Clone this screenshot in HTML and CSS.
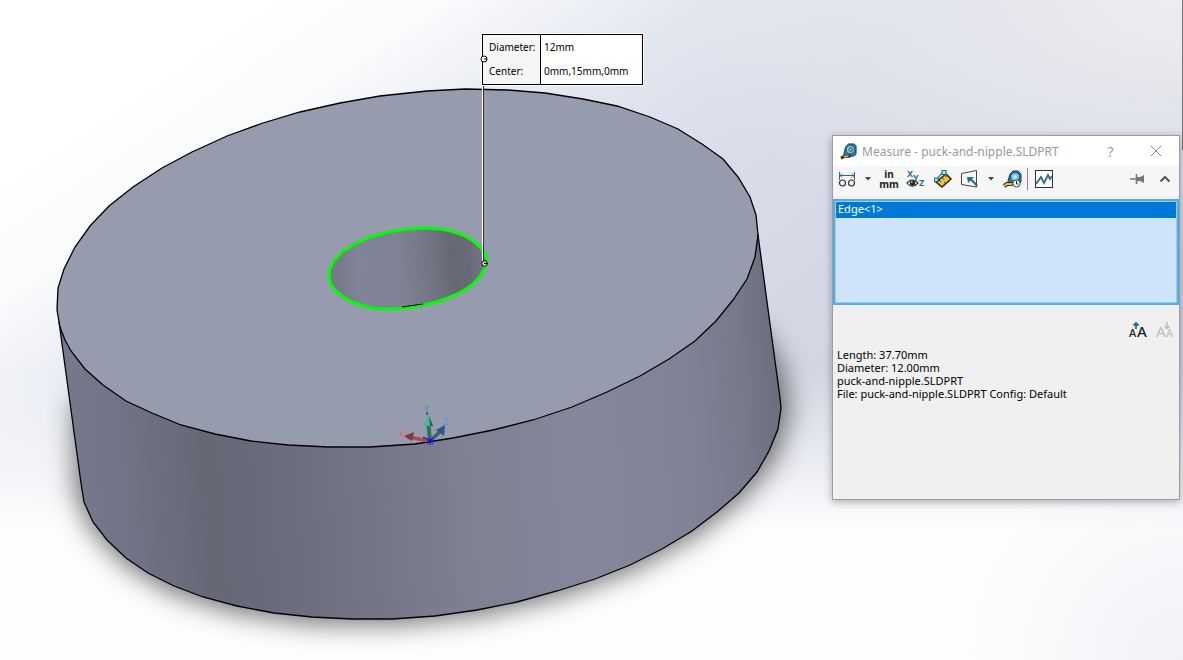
FILE: index.html
```html
<!DOCTYPE html>
<html lang="en">
<head>
<meta charset="utf-8">
<title>Measure - puck-and-nipple.SLDPRT</title>
<link rel="stylesheet" href="styles.css">
</head>
<body>
<main class="viewport">
  <svg class="model" role="img" aria-label="Puck model with selected hole edge">
    <defs>
      <linearGradient id="side" gradientUnits="userSpaceOnUse" x1="60" y1="470" x2="780" y2="415">
        <stop offset="0" stop-color="#77798c"/>
        <stop offset=".08" stop-color="#727587"/>
        <stop offset=".2" stop-color="#666876"/>
        <stop offset=".26" stop-color="#686a79"/>
        <stop offset=".42" stop-color="#747686"/>
        <stop offset=".56" stop-color="#7e8192"/>
        <stop offset=".72" stop-color="#838799"/>
        <stop offset=".87" stop-color="#808395"/>
        <stop offset=".95" stop-color="#777a8b"/>
        <stop offset="1" stop-color="#6c6e7e"/>
      </linearGradient>
      <linearGradient id="bore" gradientUnits="userSpaceOnUse" x1="329" y1="272" x2="487" y2="262">
        <stop offset="0" stop-color="#747686"/>
        <stop offset=".2" stop-color="#808496"/>
        <stop offset=".45" stop-color="#808294"/>
        <stop offset=".65" stop-color="#737583"/>
        <stop offset=".78" stop-color="#666875"/>
        <stop offset=".88" stop-color="#686a79"/>
        <stop offset="1" stop-color="#747687"/>
      </linearGradient>
      <filter id="soft" x="-20%" y="-20%" width="140%" height="140%" color-interpolation-filters="sRGB"><feGaussianBlur stdDeviation="13"/></filter>
    </defs>
    <path d="M74 400L75 490L89 527L123 564L171 593L235 613L312 624L392 625L479 616L560 597L634 570L696 536L744 498L777 457L790 410L783 370L763 330Z" fill="#484848" opacity=".75" filter="url(#soft)"/>
    <path d="M59 322L81 483L84 502L93 522L107 540L126 558L148 573L174 586L203 597L237 606L274 613L312 617L352 619L392 619L435 616L477 610L517 602L557 591L595 579L630 565L662 549L692 531L717 512L739 493L757 472L769 451L778 429L781 408L780 398L758 235L400 250Z" fill="url(#side)" stroke="#000" stroke-width="1.3"/>
    <path d="M465 89L427 91L380 96L340 103L300 112L263 123L227 136L192 152L162 168L133 187L109 206L90 226L75 247L64 269L58 288L57 310L60 327L65 340L71 351L85 369L103 385L126 401L152 413L181 425L215 434L251 441L288 445L328 447L370 447L415 444L453 438L493 430L533 420L572 407L607 392L640 376L669 359L695 341L716 321L733 300L747 279L755 257L758 235L756 215L750 197L738 177L723 159L702 144L678 129L650 117L617 106L583 99L545 93L508 90Z" fill="#979bae" stroke="#000" stroke-width="1.3"/>
    <path d="M329 277L330 268L334 261L343 251L355 244L370 237L388 232L407 229L427 228L440 229L451 231L463 235L472 240L480 247L485 254L487 261L485 268L481 275L473 284L463 291L450 297L437 302L423 305L409 308L395 309L382 309L371 308L361 305L352 302L343 297L336 291L331 285Z" fill="url(#bore)" stroke="#0f0" stroke-width="3"/>
    <path d="M402 307L423 304" stroke="#000"/>
    <g class="triad">
      <path d="M430 441L443 429" stroke="#35607f" stroke-width="3.5"/>
      <path d="M436 430L445 425L444 436Z" fill="#2e5a7a"/>
      <path d="M430 441L408 437" stroke="#b0484c" stroke-width="3.5"/>
      <path d="M404 436L414 432L412 441Z" fill="#7c3b40"/>
      <path d="M430 441L428 420" stroke="#29745d" stroke-width="4"/>
      <path d="M428 414L423 426H433Z" fill="#55b596"/>
      <path d="M429 416L430 426H433Z" fill="#235f4c"/>
      <path d="M427 412V415M430 438V445M427 441H434M427 444L433 438M427 438L433 444" stroke="#00f"/>
      <path d="M427 439L423 437" stroke="#0000c0"/>
      <text x="399" y="437" fill="#ff5b5b">X</text>
      <text x="424" y="412" fill="#22a878">Y</text>
      <text x="443" y="425" fill="#3ba0f0">Z</text>
    </g>
    <path d="M482.5 60V263" stroke="#fff"/>
    <path d="M483.5 86V263" stroke="#333"/>
    <circle cx="484.500" cy="263.500" r="2.800" fill="#cfd0d6" stroke="#000"/>
    <path d="M484 263.500H488" stroke="#000"/>
  </svg>

  <div class="callout">
    <table class="callout-table">
      <tr><th scope="row">Diameter:</th><td>12mm</td></tr>
      <tr><th scope="row">Center:</th><td>0mm,15mm,0mm</td></tr>
    </table>
    <svg class="anchor" width="8" height="8" viewBox="0 0 8 8" aria-hidden="true"><circle cx="4" cy="4" r="3" fill="#fff" stroke="#000"/><path d="M4 4H7" stroke="#000"/></svg>
  </div>

  <div class="view-edge"></div>

  <section class="dialog" role="dialog" aria-labelledby="dialog-title">
    <header class="titlebar">
      <svg width="17" height="17" viewBox="0 0 18 18" aria-hidden="true"><path d="M4 12L6 4L9 1H15L17 3V12L14 14H6Z" fill="#2d7da6" stroke="#143d57"/><circle cx="11" cy="7" r="4.500" fill="#7cc4e4" stroke="#1c5878"/><circle cx="11.500" cy="7" r="1.800" fill="#e5bf5c" stroke="#27495b"/><path d="M11 14H5L1 16" stroke="#332b20" stroke-width="3" fill="none"/><path d="M9 13.500L4 14.500" stroke="#edbd43" stroke-width="1.500"/></svg>
      <h1 id="dialog-title">Measure - puck-and-nipple.SLDPRT</h1>
      <button class="window-button" aria-label="Help">?</button>
      <button class="window-button" aria-label="Close"><svg width="12" height="12" viewBox="0 0 12 12"><path d="M1 1L11 11M11 1L1 11" stroke="#888" fill="none"/></svg></button>
    </header>

    <div class="toolbar" role="toolbar" aria-label="Measure tools">
      <button class="tool" aria-label="Arc and circle measurements"><svg width="18" height="18" viewBox="0 0 18 18" fill="none"><path d="M1.500 2V10M16.500 2V10M2 5.500H16" stroke="#276b8f"/><path d="M4 3.500L2 5.500L4 7.500M14 3.500L16 5.500L14 7.500" stroke="#276b8f"/><circle cx="4.500" cy="13" r="3" stroke="#333" stroke-width="1.200"/><circle cx="13.500" cy="13" r="3" stroke="#333" stroke-width="1.200"/></svg></button>
      <button class="caret" aria-label="Arc options"><svg width="6" height="4" viewBox="0 0 6 4"><path d="M0 0H6L3 3.500Z" fill="#444"/></svg></button>
      <button class="tool units" aria-label="Units"><span>in</span><span>mm</span></button>
      <button class="tool" aria-label="Show XYZ measurements"><svg class="xyz" width="18" height="18" viewBox="0 0 18 18"><g fill="#286f96"><text x="0" y="7">X</text><text x="6" y="11">Y</text><text x="12" y="16">Z</text></g><path d="M0 13Q5 7 11 13Q5 19.500 0 13Z" fill="#fff" stroke="#333" stroke-width="1.200"/><circle cx="5.500" cy="13" r="2.700" fill="#222"/><circle cx="4.800" cy="12.100" r=".8" fill="#fff"/></svg></button>
      <button class="tool" aria-label="Point-to-point"><svg width="18" height="18" viewBox="0 0 18 18"><path d="M2 10L9 2" stroke="#2481a7" stroke-width="1.300"/><path d="M2 12L12 4L17 9L8 17Z" fill="#edc13f" stroke="#2e2412" stroke-width="1.500"/><path d="M5 10L7 12M8 7.500L10 9.500M10 12L12 14M11 5.500L12.500 7" stroke="#3e3016"/><rect x="8" y=".5" width="4" height="4" fill="#b2e0ef" stroke="#1c6b8c"/><rect x=".5" y="8" width="3.500" height="3.500" fill="#b2e0ef" stroke="#1c6b8c"/></svg></button>
      <button class="tool" aria-label="Projected on"><svg width="18" height="18" viewBox="0 0 18 18"><path d="M.5 3.500L15.500.5V17L.5 14.500Z" fill="#f8f8f8" stroke="#444"/><path d="M6 7H13L11 9L17 15L15.500 16.500L9.500 10.500L7 13Z" fill="#246b93"/></svg></button>
      <button class="caret" aria-label="Projection options"><svg width="6" height="4" viewBox="0 0 6 4"><path d="M0 0H6L3 3.500Z" fill="#444"/></svg></button>
      <button class="tool" aria-label="Measurement history"><svg width="18" height="18" viewBox="0 0 18 18"><path d="M5 11L7 4L10 1H15L18 4V12L13 15H5Z" fill="#2d7da6" stroke="#143d57"/><circle cx="12" cy="7" r="4.500" fill="#7cc4e4" stroke="#1c5878"/><circle cx="12" cy="7" r="1.800" fill="#d8eaf0"/><path d="M9 14H4L1 16" stroke="#332b20" stroke-width="4" fill="none"/><path d="M9 14H4L1 16" stroke="#edbd43" stroke-width="2" fill="none"/><circle cx="13.500" cy="13.500" r="3.600" fill="#fff" stroke="#444"/><path d="M13.500 11V14H15.500" stroke="#222" fill="none"/></svg></button>
      <span class="separator"></span>
      <button class="tool" aria-label="Create sensor"><svg width="18" height="18" viewBox="0 0 18 18"><rect x=".5" y=".5" width="17" height="17" fill="#fff" stroke="#333"/><path d="M1 14L6 7L9 13L13 5L15 9L17 6" fill="none" stroke="#286e94" stroke-width="1.800"/></svg></button>
      <button class="tool pin" aria-label="Keep visible"><svg width="15" height="12" viewBox="0 0 15 12"><path d="M0 6H6M6.500 1V11" stroke="#777" stroke-width="1.600"/><path d="M7 4H10L14 2V10L10 8H7Z" fill="#777"/></svg></button>
      <button class="tool fold" aria-label="Collapse"><svg width="10" height="8" viewBox="0 0 10 8"><path d="M.5 6.500L5 2L9.500 6.500" fill="none" stroke="#555" stroke-width="2"/></svg></button>
    </div>

    <ul class="selection" role="listbox" aria-label="Selections">
      <li role="option" aria-selected="true">Edge&lt;1&gt;</li>
    </ul>

    <div class="font-tools">
      <button class="tool" aria-label="Increase font size"><svg width="18" height="16" viewBox="0 0 18 16" class="letters"><g fill="#222"><text class="small" x="0" y="15">A</text><text class="big" x="8" y="15">A</text></g><path d="M7 7V2M4.500 3.500L7 1L9.500 3.500" fill="none" stroke="#276b8f" stroke-width="1.800"/></svg></button>
      <button class="tool" aria-label="Decrease font size" disabled><svg width="18" height="16" viewBox="0 0 18 16" class="letters"><g fill="#c2c2c2"><text class="big" x="0" y="15">A</text><text class="small" x="10" y="15">A</text></g><path d="M11 0V6M8.500 4L11 6.500L13.500 4" fill="none" stroke="#c2c2c2" stroke-width="1.600"/></svg></button>
    </div>

    <div class="results">
      <p>Length: 37.70mm</p>
      <p>Diameter: 12.00mm</p>
      <p>puck-and-nipple.SLDPRT</p>
      <p>File: puck-and-nipple.SLDPRT Config: Default</p>
    </div>
  </section>
</main>
</body>
</html>
```
FILE: styles.css
```css
* {
  box-sizing: border-box;
}

body {
  margin: 0;
  font: 11px/13px "Noto Sans", "Open Sans", sans-serif;
  color: #000;
}

button {
  margin: 0;
  padding: 0;
  border: 0;
  background: none;
  color: inherit;
  font: inherit;
}

svg {
  display: block;
  overflow: visible;
}

.viewport {
  position: relative;
  height: 100vh;
  overflow: hidden;
  background:
    radial-gradient(circle at 100% 100%, #f1f2f7 0, rgba(241, 242, 247, 0) 16%),
    linear-gradient(to bottom, rgba(253, 253, 254, 0) 56%, #fdfdfe 80%),
    radial-gradient(ellipse at 100% 0, #ededf0 0, rgba(237, 237, 240, 0) 30%),
    linear-gradient(146deg, #fff 12%, #f9fafc 21%, #e2e6ef 33%, #dadde9 44%, #d3d7e4 60%, #cdd2df 75%);
}

.model {
  width: 100%;
  height: 100%;
}

.triad {
  font-size: 9px;
}

.callout {
  position: absolute;
  top: 34px;
  left: 482px;
  outline: 1px solid #fff;
  background: #fff;
}

.callout-table {
  border: 1px solid #000;
  border-collapse: separate;
  border-spacing: 0;
  width: 161px;
}

.callout-table th,
.callout-table td {
  height: 24px;
  padding: 0 0 0 3px;
  font-size: 10px;
  font-weight: 400;
  text-align: left;
}

.callout-table tr:last-child > * {
  height: 25px;
}

.callout-table th {
  width: 58px;
  padding-left: 6px;
  border-right: 1px solid #000;
  background: #f6f6f6;
}

.anchor {
  position: absolute;
  top: 21px;
  left: -2px;
}

.view-edge {
  position: absolute;
  top: 0;
  right: 0;
  width: 1px;
  height: 150px;
  background: #77787c;
}

.dialog {
  position: absolute;
  top: 135px;
  right: 3px;
  display: flex;
  flex-direction: column;
  width: 348px;
  min-height: 365px;
  border: 1px solid #9a9ca2;
  background: #f0f0f0;
  box-shadow: 0 2px 8px rgba(0, 0, 0, 0.3);
}

.titlebar {
  display: flex;
  align-items: center;
  height: 30px;
  padding: 0 11px 0 7px;
  background: #fff;
  color: #999;
}

.titlebar h1 {
  flex: 1;
  margin: 0 0 0 5px;
  font-size: 12px;
  font-weight: 400;
}

.window-button {
  display: flex;
  align-items: center;
  justify-content: center;
  width: 25px;
  height: 24px;
  font-size: 14px;
}

.window-button + .window-button {
  margin-left: 20px;
}

.toolbar {
  display: flex;
  align-items: center;
  gap: 9px;
  height: 30px;
  margin-bottom: 3px;
  padding: 0 9px 4px 5px;
  background: #f6f6f6;
}

.tool {
  display: flex;
  align-items: center;
  justify-content: center;
  flex: none;
  width: 18px;
}

.caret {
  width: 6px;
}

.units {
  flex-direction: column;
  font-size: 10px;
  font-weight: 700;
  line-height: 10px;
  color: #222;
}

.xyz {
  font-size: 9px;
  font-weight: 700;
}

.separator {
  width: 1px;
  height: 22px;
  margin: 0 -2px 0 -3px;
  background: #888;
}

.pin {
  margin-left: auto;
}

.fold {
  width: 10px;
  margin-left: 5px;
}

.selection {
  height: 106px;
  margin: 0;
  padding: 0;
  border: 2px solid #52ade2;
  outline: 1px solid #9dcdf2;
  outline-offset: -3px;
  background: #cfe4f8;
  list-style: none;
}

.selection li {
  margin: 1px;
  padding: 0 2px 2px;
  background: #0078d7;
  color: #fff;
  line-height: 14px;
}

.font-tools {
  display: flex;
  justify-content: flex-end;
  gap: 9px;
  padding: 17px 5px 10px;
}

.letters {
  font-weight: 500;
}

.letters .small {
  font-size: 11px;
}

.letters .big {
  font-size: 15px;
}

.results {
  padding: 0 4px;
}

.results p {
  margin: 0;
}
```
